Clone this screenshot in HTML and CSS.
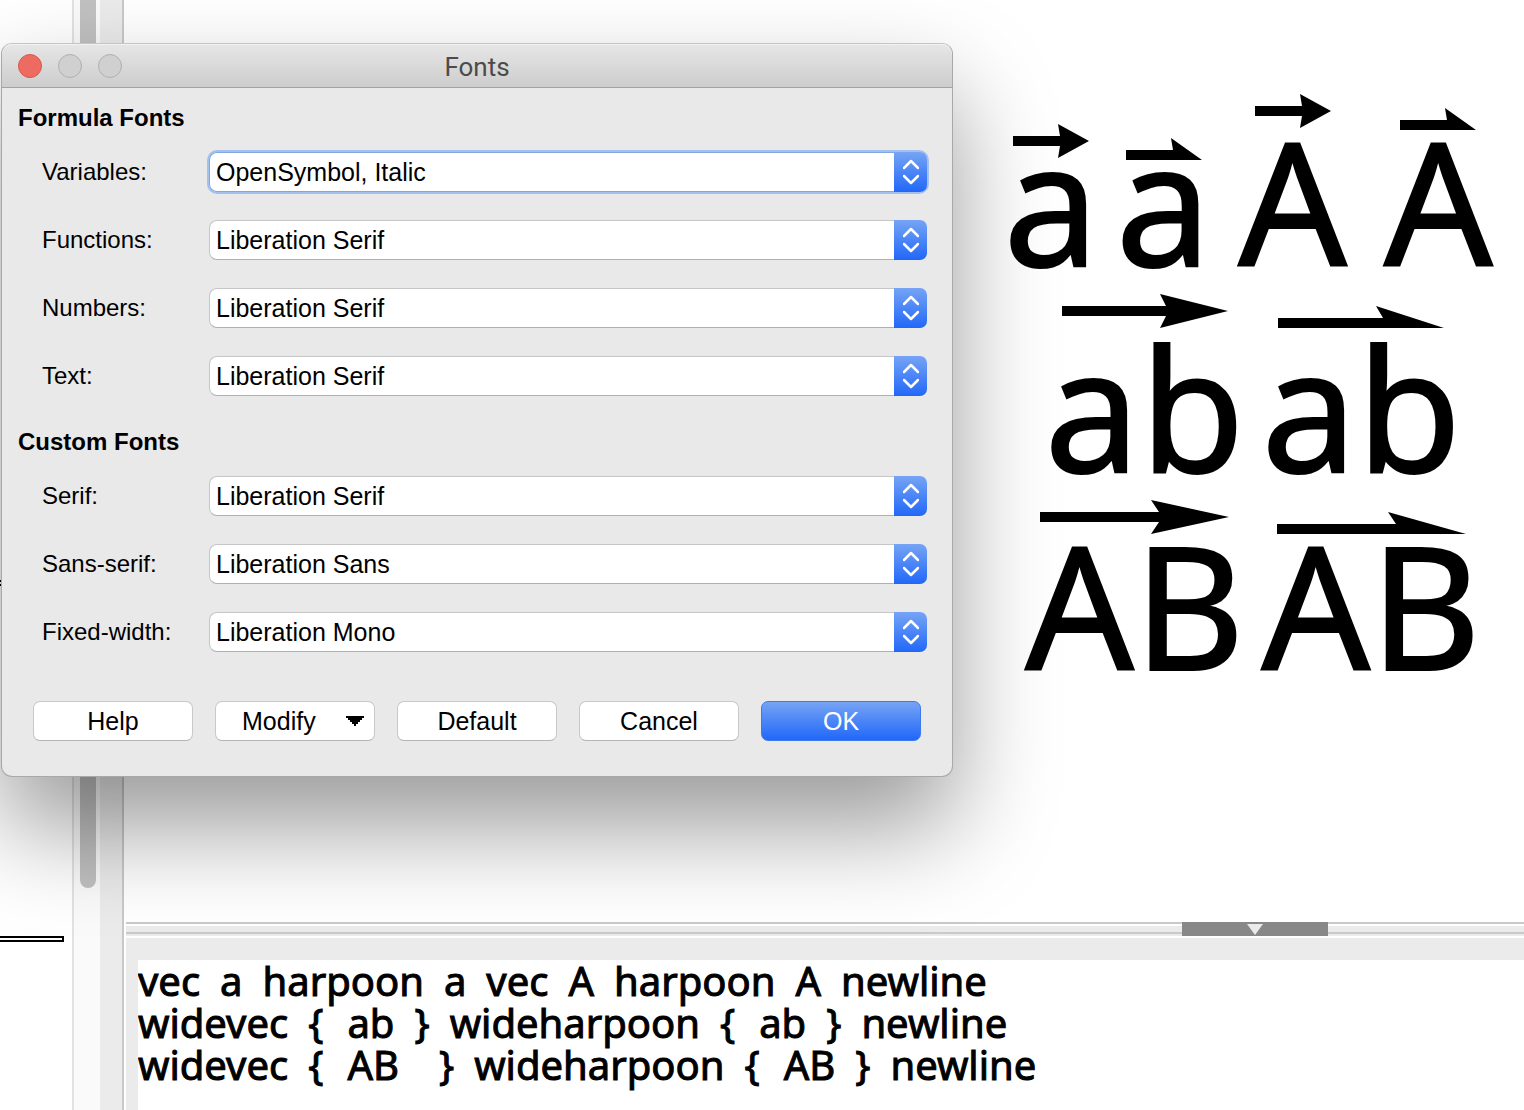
FILE: index.html
```html
<!DOCTYPE html>
<html lang="en">
<head>
    <meta charset="UTF-8">
    <meta name="viewport" content="width=device-width, initial-scale=1.0">
    <title>Fonts</title>
    <link rel="stylesheet" href="styles.css">
</head>
<body>
    <div class="workspace">
        <div class="page">
            <div class="rule"></div>
            <div class="rule last"></div>
        </div>
        <div class="scrollbar"><div class="thumb"></div></div>
        <div class="gutter"></div>

        <main class="math">
            <div class="formula">
                <div class="line">
                    <div class="term low">
                        <svg width="76" height="34" viewBox="0 0 76 34"><path d="M0 12H47L45 0L76 17L45 34L47 22H0Z"/></svg>
                        <span>a</span>
                    </div>
                    <div class="term low">
                        <svg class="half" width="76" height="22" viewBox="0 0 76 22"><path d="M0 12H47L45 0L76 22H0Z"/></svg>
                        <span>a</span>
                    </div>
                    <div class="term upper">
                        <svg width="76" height="34" viewBox="0 0 76 34"><path d="M0 12H47L45 0L76 17L45 34L47 22H0Z"/></svg>
                        <span>A</span>
                    </div>
                    <div class="term upper">
                        <svg class="half" width="76" height="22" viewBox="0 0 76 22"><path d="M0 12H47L45 0L76 22H0Z"/></svg>
                        <span>A</span>
                    </div>
                </div>
                <div class="line">
                    <div class="term tall">
                        <svg width="166" height="34" viewBox="0 0 166 34"><path d="M0 12H104L98 0L166 17L98 34L104 22H0Z"/></svg>
                        <span>ab</span>
                    </div>
                    <div class="term tall">
                        <svg width="166" height="22" viewBox="0 0 166 22"><path d="M0 12H105L98 0L166 22H0Z"/></svg>
                        <span>ab</span>
                    </div>
                </div>
                <div class="line">
                    <div class="term">
                        <svg width="189" height="34" viewBox="0 0 189 34"><path d="M0 12H119L111 0L189 17L111 34L119 22H0Z"/></svg>
                        <span>AB</span>
                    </div>
                    <div class="term">
                        <svg width="189" height="22" viewBox="0 0 189 22"><path d="M0 12H119L111 0L189 22H0Z"/></svg>
                        <span>AB</span>
                    </div>
                </div>
            </div>

            <div class="splitter">
                <button class="collapse" aria-label="Collapse">
                    <svg width="16" height="11" viewBox="0 0 16 11"><path d="M0 0H16L8 11Z"/></svg>
                </button>
            </div>

            <div class="commands">
                <textarea class="editor" aria-label="Commands" spellcheck="false">vec&#x2002;a&#x2002;harpoon&#x2002;a&#x2002;vec&#x2002;A&#x2002;harpoon&#x2002;A&#x2002;newline
widevec&#x2002;{&#x2002;&#x200A;ab&#x2002;}&#x2002;wideharpoon&#x2002;{&#x2002;&#x200A;ab&#x2002;}&#x2002;newline
widevec&#x2002;{&#x2002;&#x200A;AB&#x2002;&#x2002;}&#x2002;wideharpoon&#x2002;{&#x2002;&#x200A;AB&#x2002;}&#x2002;newline</textarea>
            </div>
        </main>
    </div>

    <div class="dialog" role="dialog" aria-labelledby="title">
        <div class="titlebar">
            <div class="lights">
                <button class="light close" aria-label="Close"></button>
                <button class="light" aria-label="Minimize" disabled></button>
                <button class="light" aria-label="Zoom" disabled></button>
            </div>
            <div class="title" id="title">Fonts</div>
        </div>

        <form class="content">
            <h2>Formula Fonts</h2>
            <div class="fields">
                <div class="field">
                    <label for="variables">Variables:</label>
                    <div class="combo active">
                        <select id="variables"><option>OpenSymbol, Italic</option></select>
                        <span class="arrows"><svg width="16" height="26" viewBox="0 0 16 26"><path d="M1 9L8 2L15 9M1 17L8 24L15 17"/></svg></span>
                    </div>
                </div>
                <div class="field">
                    <label for="functions">Functions:</label>
                    <div class="combo">
                        <select id="functions"><option>Liberation Serif</option></select>
                        <span class="arrows"><svg width="16" height="26" viewBox="0 0 16 26"><path d="M1 9L8 2L15 9M1 17L8 24L15 17"/></svg></span>
                    </div>
                </div>
                <div class="field">
                    <label for="numbers">Numbers:</label>
                    <div class="combo">
                        <select id="numbers"><option>Liberation Serif</option></select>
                        <span class="arrows"><svg width="16" height="26" viewBox="0 0 16 26"><path d="M1 9L8 2L15 9M1 17L8 24L15 17"/></svg></span>
                    </div>
                </div>
                <div class="field">
                    <label for="text">Text:</label>
                    <div class="combo">
                        <select id="text"><option>Liberation Serif</option></select>
                        <span class="arrows"><svg width="16" height="26" viewBox="0 0 16 26"><path d="M1 9L8 2L15 9M1 17L8 24L15 17"/></svg></span>
                    </div>
                </div>
            </div>

            <h2>Custom Fonts</h2>
            <div class="fields">
                <div class="field">
                    <label for="serif">Serif:</label>
                    <div class="combo">
                        <select id="serif"><option>Liberation Serif</option></select>
                        <span class="arrows"><svg width="16" height="26" viewBox="0 0 16 26"><path d="M1 9L8 2L15 9M1 17L8 24L15 17"/></svg></span>
                    </div>
                </div>
                <div class="field">
                    <label for="sans">Sans-serif:</label>
                    <div class="combo">
                        <select id="sans"><option>Liberation Sans</option></select>
                        <span class="arrows"><svg width="16" height="26" viewBox="0 0 16 26"><path d="M1 9L8 2L15 9M1 17L8 24L15 17"/></svg></span>
                    </div>
                </div>
                <div class="field">
                    <label for="fixed">Fixed-width:</label>
                    <div class="combo">
                        <select id="fixed"><option>Liberation Mono</option></select>
                        <span class="arrows"><svg width="16" height="26" viewBox="0 0 16 26"><path d="M1 9L8 2L15 9M1 17L8 24L15 17"/></svg></span>
                    </div>
                </div>
            </div>

            <div class="buttons">
                <button type="button">Help</button>
                <button type="button" class="menu">Modify
                    <svg width="18" height="10" viewBox="0 0 18 10"><path d="M0 0H18V2H16V4H14V6H12V8H10V10H8V8H6V6H4V4H2V2H0Z"/></svg>
                </button>
                <button type="button">Default</button>
                <button type="button">Cancel</button>
                <button type="button" class="ok">OK</button>
            </div>
        </form>
    </div>
</body>
</html>
```
FILE: styles.css
```css
* {
    box-sizing: border-box;
}

body {
    margin: 0;
    font-family: "Liberation Sans", Arial, sans-serif;
    font-size: 24px;
    color: #000;
    background: #fff;
}

button {
    margin: 0;
    padding: 0;
    border: 0;
    font-family: inherit;
}

/* window behind the dialog */
.workspace {
    display: flex;
    height: 100vh;
    overflow: hidden;
}

.page {
    width: 72px;
    padding-top: 580px;
}

.rule {
    width: 64px;
    height: 6px;
    border: 2px solid #000;
    border-left: 0;
}

.rule.last {
    margin-top: 350px;
}

.scrollbar {
    width: 28px;
    padding: 0 4px 0 6px;
    border-left: 2px solid #e2e2e2;
    background: #fafafa;
}

.thumb {
    width: 16px;
    height: 80%;
    border-radius: 0 0 8px 8px;
    background: #c1c1c1;
}

.gutter {
    width: 24px;
    border-right: 2px solid #c9c9c9;
    background: #ebebeb;
}

.math {
    flex: 1;
    display: flex;
    flex-direction: column;
    padding-left: 2px;
}

/* rendered formula */
.formula {
    flex: 1;
    align-self: flex-end;
    width: 542px;
    padding-top: 94px;
    display: flex;
    flex-direction: column;
    gap: 24px;
    font-family: "Noto Sans", "Open Sans", sans-serif;
    font-size: 170px;
    line-height: 140px;
    -webkit-text-stroke: 2px #000;
}

.line {
    display: flex;
    justify-content: center;
    align-items: flex-end;
    gap: 17px;
}

.term {
    display: flex;
    flex-direction: column;
    align-items: center;
}

.term.low svg {
    margin-bottom: -28px;
}

.term.low .half {
    margin-bottom: -30px;
}

.term.upper {
    padding: 0 10px;
}

.term.upper svg {
    margin-bottom: 2px;
}

.term.upper .half {
    margin-bottom: 0;
}

.term.tall svg {
    margin-bottom: 8px;
}

/* splitter with its collapse handle */
.splitter {
    display: flex;
    justify-content: flex-end;
    height: 16px;
    padding-right: 196px;
    background: linear-gradient(#c9c9c9 2px, #fff 2px, #fff 4px, #ebebeb 4px, #ebebeb 10px, #c9c9c9 10px, #c9c9c9 12px, #ebebeb 12px, #ebebeb 14px, #fff 14px);
}

.collapse {
    display: flex;
    justify-content: center;
    align-items: center;
    width: 146px;
    height: 14px;
    background: #888;
}

.collapse svg {
    fill: #ebebeb;
}

.commands {
    display: flex;
    height: 172px;
    padding: 22px 0 0 12px;
    background: #ebebeb;
}

.editor {
    flex: 1;
    padding: 0;
    border: 0;
    outline: 0;
    resize: none;
    background: #fff;
    color: #000;
    font-family: "Noto Sans", "Open Sans", sans-serif;
    font-size: 40px;
    line-height: 42px;
    -webkit-text-stroke: 1px #000;
    overflow: hidden;
}

/* fonts dialog */
.dialog {
    position: absolute;
    top: 43px;
    left: 1px;
    width: 952px;
    border: 1px solid #a8a8a8;
    border-top-color: #c4c4c4;
    border-radius: 11px;
    background: #e9e9e9;
    box-shadow: 0 50px 100px rgba(0, 0, 0, 0.4);
}

.titlebar {
    display: grid;
    grid-template-columns: 1fr auto 1fr;
    align-items: center;
    height: 44px;
    padding: 0 16px;
    border-bottom: 1px solid #a3a3a3;
    border-radius: 10px 10px 0 0;
    background: linear-gradient(#e6e6e6, #cdcdcd);
    box-shadow: inset 0 1px 0 #f2f2f2;
}

.lights {
    display: flex;
    gap: 16px;
}

.light {
    width: 24px;
    height: 24px;
    border: 1px solid #b0b0b0;
    border-radius: 50%;
    background: #d0d0d0;
}

.light.close {
    border-color: #d9574c;
    background: #ed6b60;
}

.title {
    padding-top: 2px;
    font-family: Roboto, "Noto Sans", sans-serif;
    font-size: 26px;
    line-height: 28px;
    color: #4b4b4b;
}

.content {
    padding: 16px 25px 35px 16px;
}

h2 {
    margin: 0 0 20px;
    font-size: 24px;
    line-height: 28px;
}

.fields {
    display: flex;
    flex-direction: column;
    gap: 28px;
    margin-bottom: 32px;
    padding-left: 24px;
}

.field {
    display: grid;
    grid-template-columns: 167px 1fr;
    align-items: center;
}

.combo {
    display: flex;
    height: 40px;
    border-radius: 8px;
}

.combo select {
    appearance: none;
    flex: 1;
    min-width: 0;
    padding: 0 6px;
    border: 1px solid #c6c6c6;
    border-bottom-color: #b0b0b0;
    border-right: 0;
    border-radius: 8px 0 0 8px;
    outline: 0;
    background: #fff;
    color: #000;
    font-family: inherit;
    font-size: 25px;
}

.arrows {
    display: flex;
    justify-content: center;
    align-items: center;
    width: 33px;
    border-radius: 0 7px 7px 0;
    background: linear-gradient(#76a4f5, #2167f8);
    pointer-events: none;
}

.arrows svg {
    fill: none;
    stroke: #fff;
    stroke-width: 2.5;
    stroke-linecap: round;
    stroke-linejoin: round;
}

.combo.active {
    box-shadow: 0 0 0 2px #a3c0ee;
}

.combo.active select {
    border-color: #80a6e4;
}

.buttons {
    display: grid;
    grid-template-columns: repeat(5, 1fr);
    gap: 22px;
    margin-top: 49px;
    padding: 0 6px 0 15px;
}

.buttons button {
    height: 40px;
    border: 1px solid #c8c8c8;
    border-bottom-color: #b4b4b4;
    border-radius: 7px;
    background: #fff;
    color: #000;
    font-size: 25px;
}

.buttons .menu {
    display: flex;
    justify-content: space-between;
    align-items: center;
    padding: 0 10px 0 26px;
}

.buttons .ok {
    border-color: #3c78ee;
    background: linear-gradient(#76a4f5, #2167f8);
    color: #fff;
}
```
